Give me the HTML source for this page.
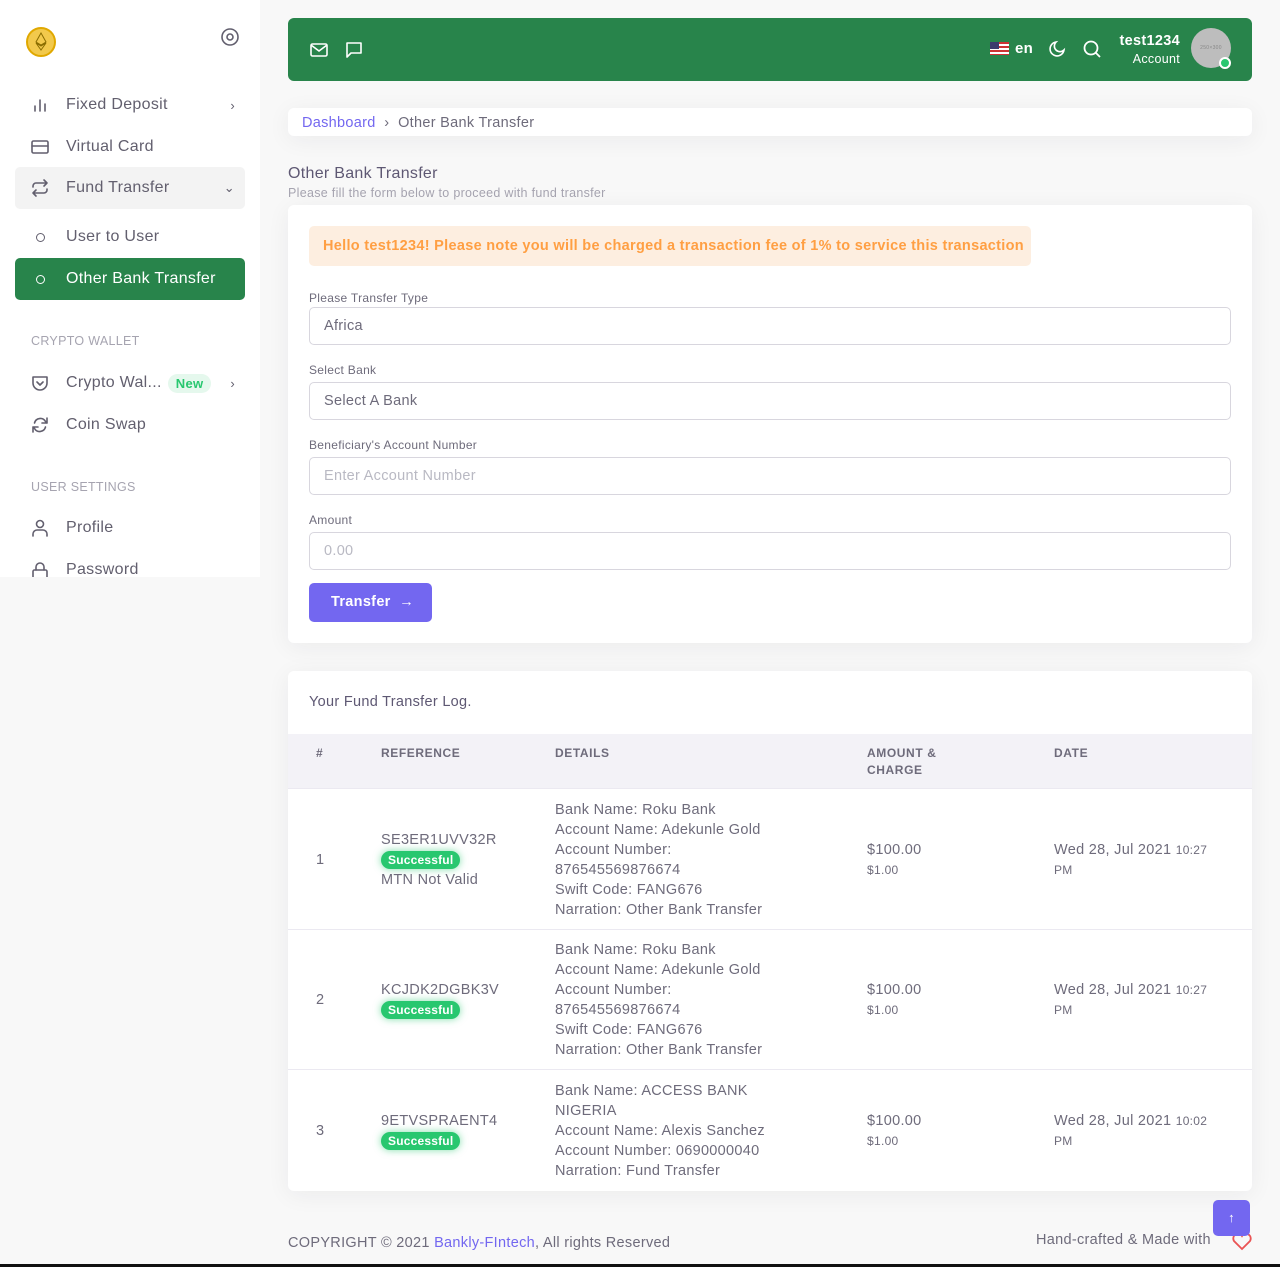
<!DOCTYPE html>
<html><head><meta charset="utf-8"><style>
*{box-sizing:border-box;margin:0;padding:0}
body{width:1280px;height:1267px;background:#f8f8f8;font-family:"Liberation Sans",sans-serif;color:#6e6b7b;position:relative;overflow:hidden;letter-spacing:.3px}
.a{position:absolute}
.side{left:0;top:0;width:260px;height:577px;background:#fff;overflow:hidden}
.nav{position:absolute;left:15px;width:230px;height:42px;display:flex;align-items:center;padding-left:15px;font-size:16px;color:#625f6e;border-radius:5px;white-space:nowrap}
.nav svg{width:20px;height:20px;margin-right:16px;fill:none;stroke:#625f6e;stroke-width:1.6;stroke-linecap:round;stroke-linejoin:round}
.chev{position:absolute;right:10px;font-size:13px;color:#625f6e}
.sec{position:absolute;left:31px;font-size:12.5px;color:#a6a4b0;letter-spacing:.3px}
.card{background:#fff;border-radius:6px;box-shadow:0 4px 24px rgba(34,41,47,.06)}
.lbl{font-size:12px;color:#6e6b7b}
.inp{position:absolute;left:21px;width:922px;height:38px;border:1px solid #d8d6de;border-radius:5px;padding-left:14px;display:flex;align-items:center;font-size:14.5px;color:#6e6b7b}
.th{position:absolute;font-size:12px;font-weight:bold;color:#6e6b7b;letter-spacing:.6px;line-height:17px}
.td{position:absolute;font-size:14.5px;color:#6e6b7b;line-height:20px;white-space:nowrap}
.badge{display:inline-block;background:#28c76f;color:#fff;font-size:12px;font-weight:bold;border-radius:9px;padding:1px 7px;line-height:16px;box-shadow:0 0 8px rgba(40,199,111,.6);letter-spacing:.2px}
.sm{font-size:12px}
</style></head><body>
<div class="a side">
 <div class="a" style="left:26px;top:27px;width:30px;height:30px;border-radius:50%;background:#f2c94c;border:2px solid #e0a800"><svg width="26" height="26" viewBox="0 0 26 26"><path d="M13 4 L8 13 L13 16 L18 13 Z M8 14 L13 21 L18 14 L13 17 Z" fill="none" stroke="#8a6d00" stroke-width="1"/></svg></div>
 <svg class="a" style="left:220px;top:27px" width="20" height="20" viewBox="0 0 20 20"><circle cx="10" cy="10" r="8" fill="none" stroke="#625f6e" stroke-width="1.6"/><circle cx="10" cy="10" r="3" fill="none" stroke="#625f6e" stroke-width="1.6"/></svg>
 <div class="nav" style="top:84px"><svg viewBox="0 0 20 20"><path d="M5 16V11M10 16V5M15 16V9"/></svg>Fixed Deposit<span class="chev">›</span></div>
 <div class="nav" style="top:126px"><svg viewBox="0 0 20 20"><rect x="2" y="4" width="16" height="12" rx="1.5"/><path d="M2 9H18"/></svg>Virtual Card</div>
 <div class="nav" style="top:167px;background:#f3f3f3"><svg viewBox="0 0 20 20"><path d="M14 2l3 3-3 3M3 9V8a3 3 0 0 1 3-3h11M6 18l-3-3 3-3M17 11v1a3 3 0 0 1-3 3H3"/></svg>Fund Transfer<span class="chev">⌄</span></div>
 <div class="nav" style="top:216px;padding-left:21px"><span style="width:9px;height:9px;border:1px solid #625f6e;border-radius:50%;margin-right:21px"></span>User to User</div>
 <div class="nav" style="top:258px;background:#28844b;color:#fff;padding-left:21px"><span style="width:9px;height:9px;border:1px solid #fff;border-radius:50%;margin-right:21px"></span>Other Bank Transfer</div>
 <div class="sec" style="top:334px">CRYPTO WALLET</div>
 <div class="nav" style="top:362px"><svg viewBox="0 0 20 20"><path d="M3 4h14v6a7 7 0 0 1-14 0z M7 9l3 3 3-3"/></svg>Crypto Wal...<span style="margin-left:6px;background:#e5f8ed;color:#28c76f;font-size:13px;font-weight:bold;padding:2px 8px;border-radius:10px">New</span><span class="chev">›</span></div>
 <div class="nav" style="top:404px"><svg viewBox="0 0 20 20"><path d="M17 3v5h-5M3 17v-5h5M4.5 8a6 6 0 0 1 11-1.5L17 8M3 12l1.5 1.5A6 6 0 0 0 15.5 12"/></svg>Coin Swap</div>
 <div class="sec" style="top:480px">USER SETTINGS</div>
 <div class="nav" style="top:507px"><svg viewBox="0 0 20 20"><circle cx="10" cy="6" r="3.5"/><path d="M3 18v-2a4 4 0 0 1 4-4h6a4 4 0 0 1 4 4v2"/></svg>Profile</div>
 <div class="nav" style="top:549px"><svg viewBox="0 0 20 20"><rect x="3" y="10" width="14" height="9" rx="1.5"/><path d="M6 10V7a4 4 0 0 1 8 0v3"/></svg>Password</div>
</div>

<div class="a" style="left:288px;top:18px;width:964px;height:63px;background:#28844b;border-radius:6px">
 <svg class="a" style="left:21px;top:22px" width="20" height="20" viewBox="0 0 20 20" fill="none" stroke="#fff" stroke-width="1.6"><rect x="2" y="4" width="16" height="12" rx="1.5"/><path d="M2 5l8 6 8-6"/></svg>
 <svg class="a" style="left:56px;top:22px" width="20" height="20" viewBox="0 0 20 20" fill="none" stroke="#fff" stroke-width="1.6" stroke-linejoin="round"><path d="M3 3h14v10H7l-4 4z"/></svg>
 <div class="a" style="left:702px;top:24px;width:19px;height:13px;background:repeating-linear-gradient(#c33 0 2px,#fff 2px 4px)"><div style="width:9px;height:7px;background:#3c3b6e"></div></div>
 <div class="a" style="left:727px;top:22px;color:#fff;font-weight:bold;font-size:15px">en</div>
 <svg class="a" style="left:759px;top:21px" width="20" height="20" viewBox="0 0 20 20" fill="none" stroke="#fff" stroke-width="1.6"><path d="M17 11A7 7 0 1 1 9 3a5.5 5.5 0 0 0 8 8z"/></svg>
 <svg class="a" style="left:794px;top:21px" width="20" height="20" viewBox="0 0 20 20" fill="none" stroke="#fff" stroke-width="1.8"><circle cx="9" cy="9" r="6.5"/><path d="M14 14l4 4"/></svg>
 <div class="a" style="right:72px;top:15px;color:#fff;font-weight:bold;font-size:14.5px;text-align:right">test1234</div>
 <div class="a" style="right:72px;top:34px;color:#fff;font-size:12.5px">Account</div>
 <div class="a" style="left:903px;top:10px;width:40px;height:40px;border-radius:50%;background:#bdbdbd;font-size:5px;color:#888;text-align:center;line-height:40px">250×300</div>
 <div class="a" style="left:931px;top:39px;width:12px;height:12px;border-radius:50%;background:#28c76f;border:2px solid #fff"></div>
</div>

<div class="a card" style="left:288px;top:108px;width:964px;height:28px;font-size:14.5px;padding:7px 14px;color:#6e6b7b"><span style="color:#7367f0">Dashboard</span> &nbsp;›&nbsp; Other Bank Transfer</div>

<div class="a" style="left:288px;top:165px;font-size:16px;color:#5e5873">Other Bank Transfer</div>
<div class="a" style="left:288px;top:186px;font-size:12.5px;color:#a6a4b0">Please fill the form below to proceed with fund transfer</div>

<div class="a card" style="left:288px;top:205px;width:964px;height:438px">
 <div class="a" style="left:21px;top:21px;width:722px;height:40px;background:#fdeee0;color:#ff9f43;font-size:14.5px;font-weight:bold;padding:12px 14px;border-radius:5px;white-space:nowrap">Hello test1234! Please note you will be charged a transaction fee of 1% to service this transaction</div>
 <div class="a lbl" style="left:21px;top:86px">Please Transfer Type</div>
 <div class="inp" style="top:102px">Africa</div>
 <div class="a lbl" style="left:21px;top:158px">Select Bank</div>
 <div class="inp" style="top:177px">Select A Bank</div>
 <div class="a lbl" style="left:21px;top:233px">Beneficiary's Account Number</div>
 <div class="inp" style="top:252px;color:#b9b9c3">Enter Account Number</div>
 <div class="a lbl" style="left:21px;top:308px">Amount</div>
 <div class="inp" style="top:327px;color:#b9b9c3">0.00</div>
 <div class="a" style="left:21px;top:378px;width:123px;height:39px;background:#7367f0;border-radius:5px;color:#fff;font-weight:bold;font-size:14.5px;padding:11px 0 0 22px;white-space:nowrap">Transfer &nbsp;→</div>
</div>

<div class="a card" style="left:288px;top:671px;width:964px;height:520px;overflow:hidden">
 <div class="a" style="left:21px;top:23px;font-size:14.5px;color:#5e5873">Your Fund Transfer Log.</div>
 <div class="a" style="left:0;top:63px;width:964px;height:55px;background:#f3f2f7;border-bottom:1px solid #ebe9f1"></div>
 <div class="th" style="left:28px;top:74px">#</div>
 <div class="th" style="left:93px;top:74px">REFERENCE</div>
 <div class="th" style="left:267px;top:74px">DETAILS</div>
 <div class="th" style="left:579px;top:74px">AMOUNT &amp;<br>CHARGE</div>
 <div class="th" style="left:766px;top:74px">DATE</div>

 <div class="td" style="left:28px;top:179px">1</div>
 <div class="td" style="left:93px;top:159px">SE3ER1UVV32R<br><span class="badge">Successful</span><br>MTN Not Valid</div>
 <div class="td" style="left:267px;top:129px">Bank Name: Roku Bank<br>Account Name: Adekunle Gold<br>Account Number:<br>876545569876674<br>Swift Code: FANG676<br>Narration: Other Bank Transfer</div>
 <div class="td" style="left:579px;top:169px">$100.00<br><span class="sm">$1.00</span></div>
 <div class="td" style="left:766px;top:169px">Wed 28, Jul 2021 <span class="sm">10:27</span><br><span class="sm">PM</span></div>
 <div class="a" style="left:0;top:258px;width:964px;height:1px;background:#ebe9f1"></div>

 <div class="td" style="left:28px;top:319px">2</div>
 <div class="td" style="left:93px;top:309px">KCJDK2DGBK3V<br><span class="badge">Successful</span></div>
 <div class="td" style="left:267px;top:269px">Bank Name: Roku Bank<br>Account Name: Adekunle Gold<br>Account Number:<br>876545569876674<br>Swift Code: FANG676<br>Narration: Other Bank Transfer</div>
 <div class="td" style="left:579px;top:309px">$100.00<br><span class="sm">$1.00</span></div>
 <div class="td" style="left:766px;top:309px">Wed 28, Jul 2021 <span class="sm">10:27</span><br><span class="sm">PM</span></div>
 <div class="a" style="left:0;top:398px;width:964px;height:1px;background:#ebe9f1"></div>

 <div class="td" style="left:28px;top:450px">3</div>
 <div class="td" style="left:93px;top:440px">9ETVSPRAENT4<br><span class="badge">Successful</span></div>
 <div class="td" style="left:267px;top:410px">Bank Name: ACCESS BANK<br>NIGERIA<br>Account Name: Alexis Sanchez<br>Account Number: 0690000040<br>Narration: Fund Transfer</div>
 <div class="td" style="left:579px;top:440px">$100.00<br><span class="sm">$1.00</span></div>
 <div class="td" style="left:766px;top:440px">Wed 28, Jul 2021 <span class="sm">10:02</span><br><span class="sm">PM</span></div>
</div>

<div class="a" style="left:288px;top:1235px;font-size:14.5px;color:#6e6b7b">COPYRIGHT © 2021 <span style="color:#7367f0">Bankly-FIntech</span>, All rights Reserved</div>
<div class="a" style="left:1036px;top:1232px;font-size:14.5px;color:#6e6b7b">Hand-crafted &amp; Made with</div>
<svg class="a" style="left:1231px;top:1231px" width="22" height="20" viewBox="0 0 22 20"><path d="M11 18L3 10a4.5 4.5 0 0 1 8-5 4.5 4.5 0 0 1 8 5z" fill="none" stroke="#ea5455" stroke-width="1.8"/></svg>
<div class="a" style="left:1213px;top:1200px;width:37px;height:36px;background:#7367f0;border-radius:5px;color:#fff;text-align:center;line-height:36px;font-size:13px">↑</div>
<div class="a" style="left:0;top:1264px;width:1280px;height:3px;background:#111"></div>
</body></html>
